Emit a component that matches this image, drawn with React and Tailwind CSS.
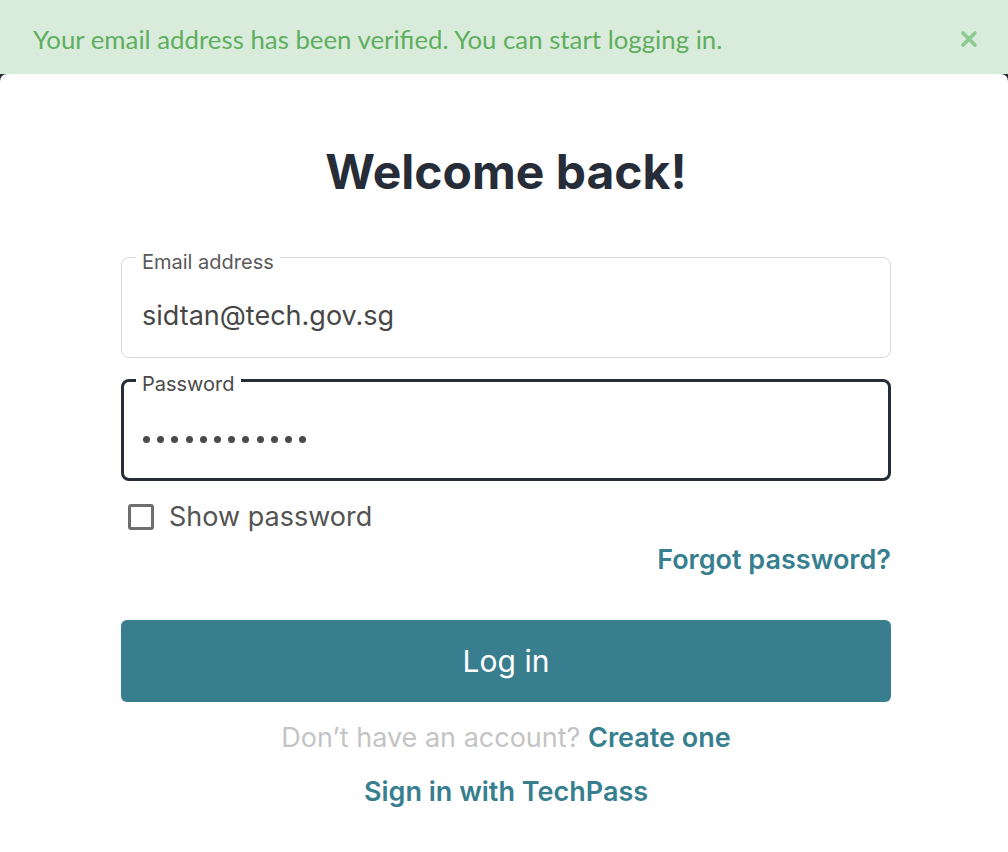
import { useState } from 'react'

function App() {
  const [showPassword, setShowPassword] = useState(false)
  const [bannerOpen, setBannerOpen] = useState(true)
  const password = 'Password123!'

  return (
    <div className="min-h-[852px] w-full bg-[#2a2f37] font-['Inter',sans-serif]">
      {/* Verified banner */}
      {bannerOpen && (
        <div className="flex h-[74px] items-center justify-between bg-[#d9ecdc] pl-[33px] pr-[30px] pt-[4px]">
          <span className="font-['Lato',sans-serif] text-[25.8px] text-[#5fae5f]">
            Your email address has been verified. You can start logging in.
          </span>
          <button type="button" onClick={() => setBannerOpen(false)} className="text-[#8ccb8f]">
            <svg width="18" height="18" viewBox="0 0 18 18" fill="none">
              <path d="M3 3L15 15M15 3L3 15" stroke="currentColor" strokeWidth="3.6" strokeLinecap="round" />
            </svg>
          </button>
        </div>
      )}

      {/* Login card */}
      <div className="min-h-[778px] rounded-t-[7px] bg-white pl-[121px] pt-[69px]">
        <div className="flex w-[770px] flex-col">
          <h1 className="text-center text-[48px] font-bold leading-[58px] text-[#262c38]">Welcome back!</h1>

          {/* Email */}
          <div className="relative mt-[56px] h-[101px] rounded-[8px] border border-[#d9d9d9] px-[20px] pt-[41px]">
            <span className="absolute left-[14px] top-[-8px] bg-white px-[6px] text-[20px] leading-[24px] text-[#5a5a5a]">
              Email address
            </span>
            <div className="text-[27px] leading-[34px] text-[#474747]">sidtan@tech.gov.sg</div>
          </div>

          {/* Password */}
          <div className="relative mt-[21px] h-[102px] rounded-[8px] border-[3px] border-[#262d38] px-[19px] pt-[40px]">
            <span className="absolute left-[12px] top-[-10px] bg-white px-[6px] text-[20px] leading-[24px] text-[#4a4a4a]">
              Password
            </span>
            {showPassword ? (
              <div className="text-[27px] leading-[34px] text-[#474747]">{password}</div>
            ) : (
              <div className="flex h-[34px] items-center gap-[7.2px]">
                {password.split('').map((_, i) => (
                  <span key={i} className="h-[7px] w-[7px] rounded-full bg-[#4a4a4a]" />
                ))}
              </div>
            )}
          </div>

          {/* Show password */}
          <label className="mt-[21px] flex h-[30px] cursor-pointer items-center pl-[7px]">
            <input
              type="checkbox"
              checked={showPassword}
              onChange={(e) => setShowPassword(e.target.checked)}
              className="h-[26px] w-[26px] appearance-none rounded-[3px] border-[3px] border-[#6e6e6e] bg-white checked:bg-[#377f8f]"
            />
            <span className="ml-[15px] text-[27px] text-[#545454]">Show password</span>
          </label>

          <div className="mt-[12px] flex justify-end">
            <a href="#" className="text-[27px] font-semibold leading-[32px] text-[#377f8f]">Forgot password?</a>
          </div>

          <button type="button" className="mt-[44px] h-[82px] rounded-[6px] bg-[#387e8e] text-[30px] text-white">
            Log in
          </button>

          <p className="mt-[20px] text-center text-[27px] leading-[32px] text-[#c4c4c4]">
            Don’t have an account? <a href="#" className="font-semibold text-[#377f8f]">Create one</a>
          </p>

          <a href="#" className="mt-[22px] text-center text-[27px] font-semibold leading-[32px] text-[#377f8f]">
            Sign in with TechPass
          </a>
        </div>
      </div>
    </div>
  )
}

export default App
